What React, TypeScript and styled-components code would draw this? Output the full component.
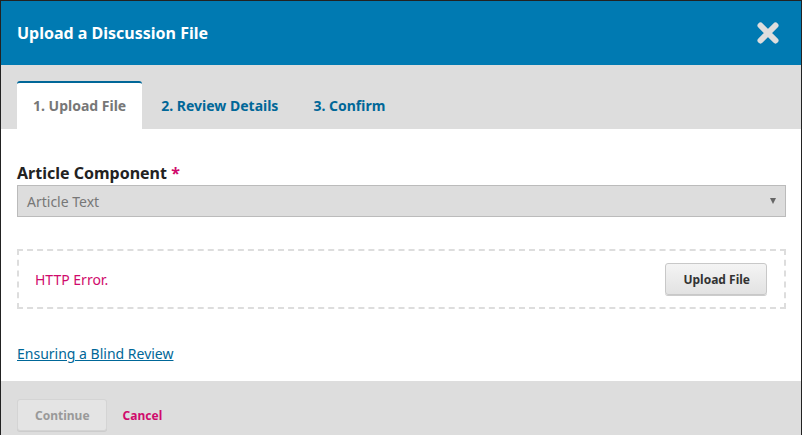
import React from "react";
import styled, { createGlobalStyle } from "styled-components";

const Global = createGlobalStyle`
  html, body { margin: 0; padding: 0; background: #222; }
  body { font-family: "Noto Sans", "Open Sans", sans-serif; }
  * { box-sizing: border-box; }
`;

const Modal = styled.div`
  margin: 1px 1px 0 1px;
  width: 800px;
  height: 434px;
  background: #fff;
  display: flex;
  flex-direction: column;
  overflow: hidden;
`;

const Header = styled.div`
  height: 64px;
  background: #007ab2;
  display: flex;
  align-items: center;
  justify-content: space-between;
  padding: 0 21px 0 16px;
`;

const Title = styled.h1`
  margin: 0;
  color: #fff;
  font-size: 16px;
  font-weight: 700;
  line-height: 1;
`;

const Close = styled.button`
  border: 0;
  background: none;
  padding: 0;
  width: 24px;
  height: 24px;
  display: flex;
  align-items: center;
  justify-content: center;
  cursor: pointer;
`;

const TabBar = styled.div`
  height: 64px;
  background: #ddd;
  padding: 16px 16px 0 16px;
  display: flex;
  align-items: flex-end;
`;

const Tab = styled.div<{ $active?: boolean }>`
  height: 48px;
  padding: 0 16px 2px 16px;
  display: flex;
  align-items: center;
  font-size: 14px;
  font-weight: 700;
  color: ${(p) => (p.$active ? "#777" : "#006798")};
  background: ${(p) => (p.$active ? "#fff" : "transparent")};
  border-top: 2px solid ${(p) => (p.$active ? "#006798" : "transparent")};
  border-radius: 3px 3px 0 0;
  margin-right: 3px;
`;

const Content = styled.div`
  flex: 1;
  padding: 32px 16px 0 16px;
  display: flex;
  flex-direction: column;
`;

const Label = styled.label`
  font-size: 16px;
  font-weight: 700;
  color: #222;
  line-height: 24px;
  display: block;
`;

const Required = styled.span`
  color: #d00a6c;
`;

const Select = styled.div`
  height: 32px;
  width: 769px;
  background: #ddd;
  border: 1px solid #bbb;
  display: flex;
  align-items: center;
  justify-content: space-between;
  padding: 0 8px 0 9px;
  font-size: 14px;
  color: #777;
`;

const Arrow = styled.span`
  width: 0;
  height: 0;
  border-left: 3.5px solid transparent;
  border-right: 3.5px solid transparent;
  border-top: 6px solid #666;
  margin-right: 1px;
`;

const DropZone = styled.div`
  margin-top: 32px;
  width: 769px;
  height: 60px;
  border: 2px dashed #ddd;
  display: flex;
  align-items: center;
  justify-content: space-between;
  padding: 0 17px 0 16px;
`;

const Error = styled.span`
  color: #d00a6c;
  font-size: 14px;
`;

const Button = styled.button<{ $disabled?: boolean }>`
  height: 32px;
  padding: 0 16px 0 17px;
  font-family: inherit;
  font-size: 12px;
  font-weight: 700;
  color: ${(p) => (p.$disabled ? "#999" : "#333")};
  background: ${(p) =>
    p.$disabled ? "#e4e4e4" : "linear-gradient(#f4f4f4, #e2e2e2)"};
  border: 1px solid ${(p) => (p.$disabled ? "#d4d4d4" : "#c8c8c8")};
  border-radius: 3px;
  box-shadow: 0 1px 0 #ccc;
`;

const Link = styled.a`
  margin-top: 35px;
  font-size: 14px;
  color: #006798;
  text-decoration: underline;
  align-self: flex-start;
`;

const Footer = styled.div`
  height: 54px;
  background: #ddd;
  padding: 18px 16px 0 16px;
  display: flex;
  align-items: flex-start;
  gap: 16px;
`;

const Cancel = styled.a`
  height: 32px;
  display: flex;
  align-items: center;
  color: #d00a6c;
  font-size: 12px;
  font-weight: 700;
  text-decoration: none;
`;

export default function App() {
  return (
    <>
      <Global />
      <Modal>
        <Header>
          <Title>Upload a Discussion File</Title>
          <Close aria-label="Close">
            <svg width="24" height="24" viewBox="0 0 24 24">
              <path
                d="M4.5 4.5 L19.5 19.5 M19.5 4.5 L4.5 19.5"
                stroke="#ddd"
                strokeWidth="6"
                strokeLinecap="round"
              />
            </svg>
          </Close>
        </Header>
        <TabBar>
          <Tab $active>1. Upload File</Tab>
          <Tab>2. Review Details</Tab>
          <Tab>3. Confirm</Tab>
        </TabBar>
        <Content>
          <Label>
            Article Component <Required>*</Required>
          </Label>
          <Select>
            <span>Article Text</span>
            <Arrow />
          </Select>
          <DropZone>
            <Error>HTTP Error.</Error>
            <Button>Upload File</Button>
          </DropZone>
          <Link href="#">Ensuring a Blind Review</Link>
        </Content>
        <Footer>
          <Button $disabled>Continue</Button>
          <Cancel href="#">Cancel</Cancel>
        </Footer>
      </Modal>
    </>
  );
}
